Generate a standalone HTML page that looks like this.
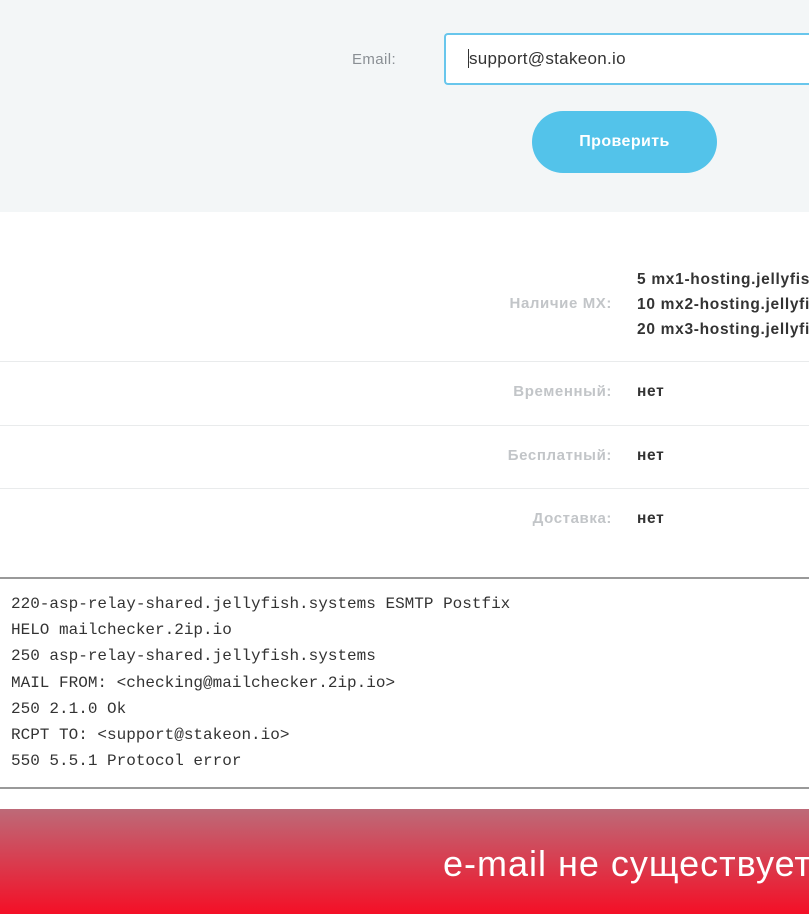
<!DOCTYPE html>
<html><head><meta charset="utf-8"><style>
*{margin:0;padding:0;box-sizing:border-box}
html,body{width:809px;height:914px;overflow:hidden}
body{background:#fff;font-family:"Liberation Sans","DejaVu Sans",sans-serif;position:relative}
.top{position:absolute;left:0;top:0;width:809px;height:212px;background:#f3f6f7}
.lbl{position:absolute;color:#8a8f94;font-size:15px;letter-spacing:0.4px}
.inp{position:absolute;left:444px;top:33px;width:365px;height:52px;background:#fff;border:2px solid #68c6ec;border-right:none;border-radius:4px 0 0 4px;font-size:17px;color:#333;padding:14px 0 0 23px;letter-spacing:0.3px;overflow:hidden;white-space:nowrap}
.btn{position:absolute;left:532px;top:111px;width:185px;height:62px;border-radius:31px;background:#53c3ea;color:#fff;font-weight:bold;font-size:16px;text-align:center;line-height:62px;letter-spacing:0.4px}
.k{position:absolute;right:197px;color:#c2c5c8;font-weight:bold;font-size:15px;text-align:right;letter-spacing:0.6px}
.v{position:absolute;left:637px;width:172px;overflow:hidden;color:#333;font-weight:bold;font-size:15.5px;white-space:nowrap;line-height:25px;letter-spacing:0.7px}
.hr{position:absolute;left:0;width:809px;height:1px;background:#e9ebec}
.pre{position:absolute;left:0;top:577px;width:809px;height:212px;border-top:2px solid #999;border-bottom:2px solid #999;font-family:"Liberation Mono","DejaVu Sans Mono",monospace;font-size:16px;color:#333;padding:12px 0 0 11px;line-height:26.2px;white-space:pre;overflow:hidden}
.ban{position:absolute;left:0;top:809px;width:809px;height:105px;background:linear-gradient(#bd6a78,#f40f26);overflow:hidden}
.ban span{position:absolute;left:443px;top:34px;color:#fff;font-size:36px;white-space:nowrap;letter-spacing:1px}
</style></head><body>
<div class="top"></div>
<div class="lbl" style="left:352px;top:51px">Email:</div>
<div class="inp"><span style="border-left:1px solid #333;margin-left:-1px"></span>support@stakeon.io</div>
<div class="btn">Проверить</div>
<div class="k" style="top:295px">Наличие MX:</div>
<div class="v" style="top:267px">5 mx1-hosting.jellyfish.systems<br>10 mx2-hosting.jellyfish.systems<br>20 mx3-hosting.jellyfish.systems</div>
<div class="hr" style="top:361px"></div>
<div class="k" style="top:383px">Временный:</div>
<div class="v" style="top:379px">нет</div>
<div class="hr" style="top:425px"></div>
<div class="k" style="top:447px">Бесплатный:</div>
<div class="v" style="top:443px">нет</div>
<div class="hr" style="top:488px"></div>
<div class="k" style="top:510px">Доставка:</div>
<div class="v" style="top:506px">нет</div>
<div class="pre">220-asp-relay-shared.jellyfish.systems ESMTP Postfix
HELO mailchecker.2ip.io
250 asp-relay-shared.jellyfish.systems
MAIL FROM: &lt;checking@mailchecker.2ip.io&gt;
250 2.1.0 Ok
RCPT TO: &lt;support@stakeon.io&gt;
550 5.5.1 Protocol error</div>
<div class="ban"><span>e-mail не существует</span></div>
</body></html>
